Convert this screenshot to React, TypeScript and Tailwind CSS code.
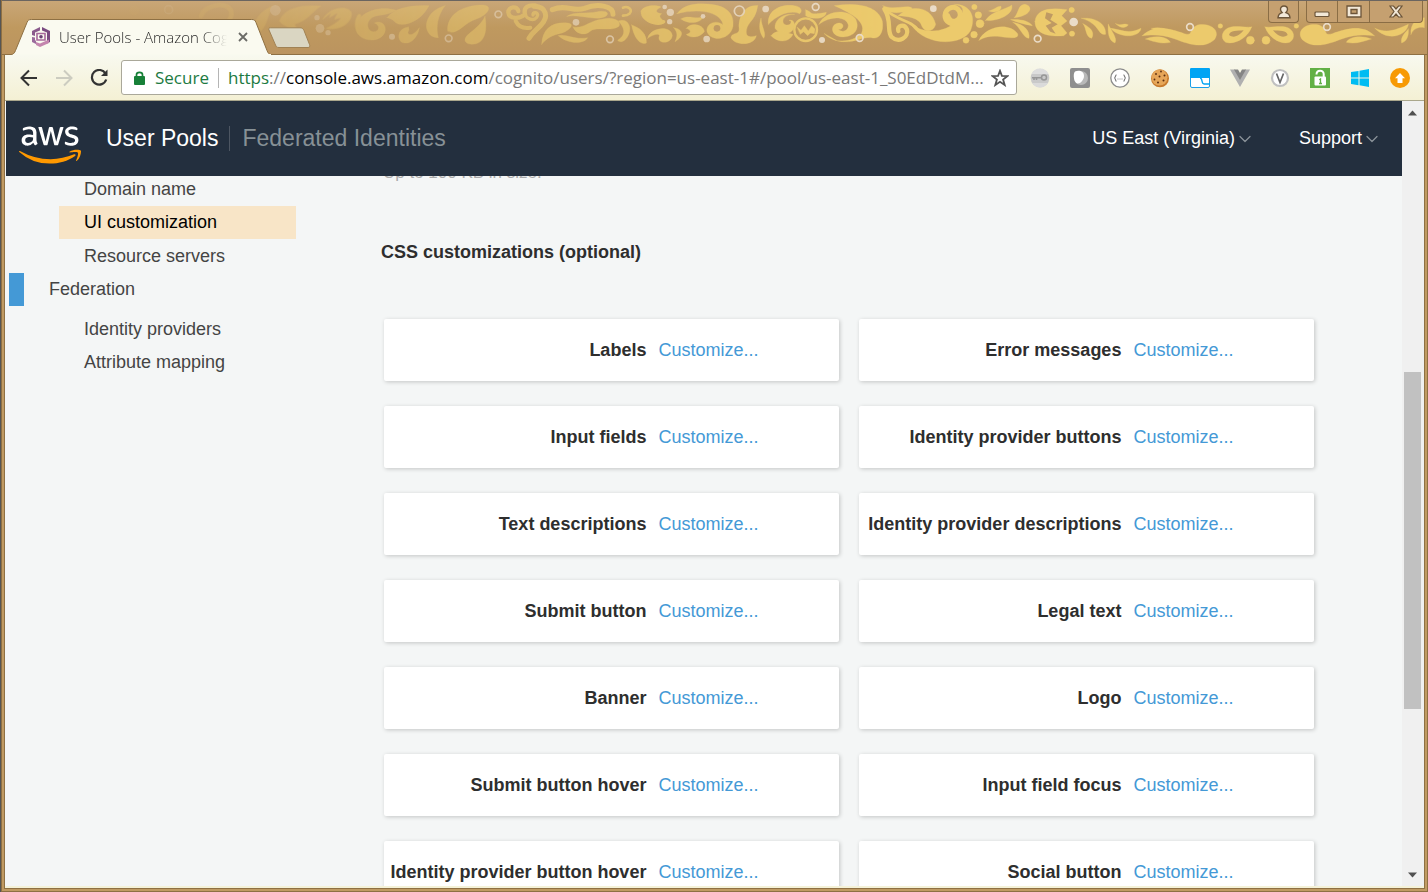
import React from "react";
import { FaAws } from "react-icons/fa";
import { ChevronDown } from "lucide-react";

const settings: string[] = [
  "Labels",
  "Error messages",
  "Input fields",
  "Identity provider buttons",
  "Text descriptions",
  "Identity provider descriptions",
  "Submit button",
  "Legal text",
  "Banner",
  "Logo",
  "Submit button hover",
  "Input field focus",
  "Identity provider button hover",
  "Social button",
];

function Dot({ x, y, r }: { x: number; y: number; r: number }) {
  return <circle cx={x} cy={y} r={r} fill="#eadcc8" stroke="none" />;
}

function Ring({ x, y, r }: { x: number; y: number; r: number }) {
  return <circle cx={x} cy={y} r={r} fill="none" stroke="#eadcc8" strokeWidth="5" />;
}

/* Golden scroll-work that fades in from the left of the title bar. */
function Ornament() {
  return (
    <svg
      className="pointer-events-none absolute -left-[2px] top-0 ml-px"
      width="1428"
      height="54"
      viewBox="0 0 1428 54"
      aria-hidden="true"
    >
      <defs>
        <linearGradient id="fade" gradientUnits="userSpaceOnUse" x1="180" y1="0" x2="880" y2="0">
          <stop offset="0" stopColor="#fff" stopOpacity="0.1" />
          <stop offset="0.35" stopColor="#fff" stopOpacity="0.42" />
          <stop offset="1" stopColor="#fff" stopOpacity="1" />
        </linearGradient>
        <mask id="fadeMask" maskUnits="userSpaceOnUse" x="0" y="0" width="1428" height="54">
          <rect width="1428" height="54" fill="url(#fade)" />
        </mask>
      </defs>
      <g mask="url(#fadeMask)" fill="#ecca6c" stroke="#ecca6c" strokeLinecap="round" strokeWidth="1">
        <g transform="scale(0.33333)">
          <path d="M600 45C610 10 680 0 690 30C700 60 650 90 640 60" fill="none" strokeWidth="14" />
          <path d="M760 70C770 40 790 25 815 15C800 40 800 70 780 90Z" />
          <path d="M835 60C850 20 900 10 960 15C930 35 920 60 880 70C895 85 880 100 870 85C860 75 845 75 835 60Z" />
          <path d="M965 55C985 15 1050 10 1052 40C1050 70 1010 90 975 82C1000 70 1015 60 1020 50L1000 55L1010 35L985 50L990 35Z" />
          <path d="M1075 45C1060 70 1070 100 1090 100" fill="none" strokeWidth="12" />
          <circle cx="400" cy="28" r="14" opacity="0.5" />
          <Ring x={503} y={26} r={12} />
          <Dot x={823} y={28} r={16} />
          <Dot x={948} y={50} r={8} />
          <Dot x={957} y={82} r={13} />
          <Dot x={981} y={95} r={8} />
        </g>
        <g transform="translate(320 0) scale(0.33333)">
          <path d="M226 28C170 10 105 38 105 82C108 124 180 130 192 92C198 70 178 56 160 66C178 72 176 92 158 92C136 92 132 56 162 46C184 40 196 44 226 28Z" />
          <path d="M198 50C220 20 270 12 324 14C306 50 270 72 238 70C218 68 222 54 198 50Z" />
          <path d="M372 14C330 24 310 60 318 86C324 104 338 110 352 110C344 76 350 44 372 14Z" />
          <path d="M380 90C376 44 420 12 486 12C520 14 498 44 466 54C430 66 416 94 392 94Z" />
          <path d="M492 46C500 90 492 130 452 130C426 128 428 112 442 100C464 82 482 68 492 46Z" />
          <path d="M262 78C234 80 226 108 240 122C262 136 290 114 295 80C284 96 268 106 262 98C258 92 268 90 262 78Z" />
          <g fill="none">
            <path d="M592 30C590 14 562 16 562 34C564 56 598 54 612 40C606 18 624 10 644 14" strokeWidth="13" />
            <path d="M640 16C676 18 684 46 660 72C646 88 634 94 624 112" strokeWidth="15" />
            <path d="M612 26C606 56 646 66 650 42C648 32 636 34 636 42" strokeWidth="10" />
            <path d="M584 60C592 76 606 84 628 80" strokeWidth="12" />
            <path d="M694 26C736 8 756 34 790 22C830 6 876 14 876 40" strokeWidth="15" />
            <path d="M906 20C930 10 944 42 906 44" strokeWidth="8" />
            <path d="M968 44C984 66 1014 72 1028 62" strokeWidth="10" />
          </g>
          <path d="M662 130C664 84 692 62 740 66C768 70 738 94 716 98C696 102 678 110 662 130Z" />
          <path d="M738 46C760 30 790 40 830 32C860 26 868 40 850 48C820 60 772 38 738 46Z" />
          <path d="M756 78C790 84 800 60 846 54C880 46 902 62 894 76C870 94 824 74 806 92C790 106 764 98 756 78Z" />
          <path d="M712 104C740 98 760 118 800 110C790 130 740 130 712 104Z" />
          <path d="M892 60C914 50 934 70 924 98C916 120 898 128 890 118C918 100 910 80 892 60Z" />
          <path d="M932 72C958 80 978 100 976 126C958 134 938 110 932 72Z" />
          <path d="M960 30C970 10 1010 12 1020 18C1000 28 1004 36 1022 38C1006 48 1030 56 1030 66C1000 76 956 60 960 30Z" />
          <path d="M980 112C986 80 1050 70 1054 104C1050 130 1010 130 1014 108C1020 96 1000 98 980 112Z" />
          <Dot x={213} y={107} r={9} />
          <Ring x={383} y={112} r={10} />
          <Ring x={532} y={40} r={10} />
          <Dot x={765} y={64} r={10} />
          <Ring x={867} y={115} r={10} />
          <Dot x={1031} y={18} r={7} />
          <Dot x={1048} y={34} r={11} />
          <Dot x={1046} y={62} r={8} />
        </g>
        <g transform="translate(660 0) scale(0.33333)">
          <path d="M48 38C70 8 110 6 150 10C200 16 220 40 216 76C208 118 150 124 138 92C134 66 168 54 186 72C182 40 130 18 48 38Z" />
          <circle cx="168" cy="82" r="10" fill="#bf9a63" stroke="none" />
          <path d="M38 80C66 84 72 104 42 122C50 104 50 94 38 80Z" />
          <path d="M60 54C80 40 104 56 126 48C120 66 84 72 60 54Z" />
          <path d="M76 82C94 60 130 74 130 92C110 116 80 108 76 100C92 96 92 88 76 82Z" />
          <path d="M290 14C250 10 232 50 234 80C238 104 212 92 210 110C220 134 280 136 286 104C268 110 254 108 256 90C260 60 284 60 290 14Z" />
          <path d="M300 52C292 76 296 96 308 112C318 100 302 80 300 52Z" />
          <path d="M322 70C318 30 356 8 400 14C420 16 426 30 416 38C390 26 350 40 322 70Z" />
          <path d="M400 40C360 40 360 70 376 72C392 74 394 58 384 58C400 52 410 80 388 94C370 104 350 94 342 82C340 60 360 36 400 40Z" />
          <path d="M330 104C350 126 384 126 396 100C376 96 350 80 330 104Z" />
          <circle cx="434" cy="86" r="34" fill="none" strokeWidth="7" />
          <path d="M408 78L420 88L430 74L442 90L452 74L462 84L460 98L448 96L440 104L428 92L418 100Z" />
          <path d="M434 26C460 36 440 44 496 34C494 56 454 56 434 44Z" />
          <path d="M474 70C490 28 560 20 584 54C604 98 556 116 528 104C508 96 510 66 536 66C556 70 542 90 532 84C540 96 562 92 562 72C556 46 510 42 474 70Z" />
          <path d="M490 98C520 130 570 124 600 100C620 66 576 38 520 14C590 4 650 14 664 60C670 100 650 116 632 110C600 106 580 130 530 120Z" />
          <g fill="none">
            <path d="M670 24C694 60 676 90 692 108C714 128 744 108 738 86C730 66 706 74 712 90" strokeWidth="13" />
            <path d="M676 28C710 60 750 56 772 88" strokeWidth="8" />
            <path d="M860 44C868 74 906 60 896 32C884 8 854 20 852 44C852 60 870 74 892 70" strokeWidth="15" />
          </g>
          <path d="M666 14C700 30 740 8 754 22C740 34 700 40 680 30Z" />
          <path d="M712 44C750 10 810 14 824 70C816 98 788 92 782 74C776 50 740 46 712 44Z" />
          <path d="M750 70C790 100 850 96 890 60C920 20 900 14 880 10C930 10 946 50 928 90C900 136 790 136 750 70Z" />
          <circle cx="940" cy="18" r="8" />
          <circle cx="952" cy="42" r="10" />
          <circle cx="957" cy="68" r="12" />
          <circle cx="939" cy="101" r="10" />
          <circle cx="915" cy="118" r="9" />
          <path d="M954 118C970 80 1040 60 1070 98C1076 116 1040 110 1010 106C990 104 970 108 954 118Z" />
          <path d="M974 58C990 30 1040 24 1052 12C1060 40 1010 62 974 58Z" />
          <path d="M984 30C1004 24 1010 14 1020 16C1024 30 1000 38 984 30Z" />
          <path d="M1060 50C1076 30 1070 14 1090 10C1120 14 1110 46 1060 50Z" />
          <path d="M1050 56C1080 54 1104 60 1114 74C1090 70 1070 64 1050 56Z" />
          <path d="M1056 64C1090 70 1108 90 1104 112C1086 112 1080 80 1056 64Z" />
          <Ring x={235} y={30} r={15} />
          <Dot x={126} y={46} r={7} />
          <Dot x={137} y={114} r={10} />
          <Dot x={314} y={24} r={10} />
          <Ring x={464} y={18} r={10} />
          <Dot x={483} y={117} r={9} />
          <Ring x={596} y={111} r={10} />
          <Dot x={817} y={23} r={10} />
        </g>
        <g transform="translate(1020 0) scale(0.33333)">
          <path d="M42 62C46 22 90 20 138 26L122 44L138 60L120 74L138 96L128 104C80 108 42 98 42 62Z" />
          <path d="M76 34L96 40L88 56L110 70L92 80L104 98L88 92L74 74L92 66L72 52Z" fill="#bf9a63" stroke="none" />
          <circle cx="152" cy="27" r="8" />
          <circle cx="153" cy="98" r="8" />
          <path d="M182 52C220 48 256 66 254 100C228 104 240 70 182 52Z" />
          <path d="M186 68C210 80 222 94 212 112C192 106 198 84 186 68Z" />
          <path d="M262 70C272 92 290 112 282 126C262 120 260 92 262 70Z" />
          <path d="M268 82C300 84 320 102 360 82C358 108 300 116 268 82Z" />
          <path d="M284 68C304 76 310 64 322 72C312 84 296 80 284 68Z" />
          <path d="M364 104C400 68 450 84 490 98C520 106 500 84 530 72C570 64 600 90 580 116C546 146 500 128 462 114C430 102 400 100 364 104Z" />
          <path d="M374 114C400 102 440 106 448 124C420 130 400 122 374 114Z" />
          <path d="M392 82C410 78 430 80 440 90C420 92 404 88 392 82Z" />
          <circle cx="598" cy="75" r="7" />
          <path d="M692 78C680 112 640 132 614 124C596 112 602 84 630 78C650 74 670 80 692 78Z" />
          <path d="M668 88C650 90 626 88 624 102C640 114 656 102 668 88Z" fill="#bd985f" stroke="none" />
          <circle cx="688" cy="118" r="12" />
          <circle cx="735" cy="118" r="12" />
          <path d="M732 78C744 112 780 132 806 124C826 112 820 84 794 78C774 74 754 80 732 78Z" />
          <path d="M756 88C774 90 798 88 800 102C784 114 768 102 756 88Z" fill="#bd985f" stroke="none" />
          <circle cx="826" cy="75" r="7" />
          <path d="M1060 104C1024 68 974 84 934 98C904 106 924 84 894 72C854 64 824 90 844 116C878 146 924 128 962 114C994 102 1024 100 1060 104Z" />
          <path d="M1050 114C1024 102 984 106 976 124C1004 130 1024 122 1050 114Z" />
          <path d="M1062 82C1100 100 1130 84 1162 70C1158 104 1100 124 1062 82Z" />
          <path d="M1162 84C1164 104 1158 120 1142 126C1138 108 1152 96 1162 84Z" />
          <path d="M1170 100C1166 66 1190 52 1210 50V80C1194 76 1176 84 1170 100Z" />
          <Ring x={50} y={113} r={10} />
          <Dot x={158} y={63} r={13} />
          <Ring x={507} y={78} r={10} />
          <Ring x={918} y={78} r={10} />
        </g>
      </g>
    </svg>
  );
}

function PoolIcon() {
  return (
    <svg className="shrink-0" width="20" height="20" viewBox="0 0 20 20" aria-hidden="true">
      <path d="M9 0L1 4V8L4 9V5.500L9 3.500Z" fill="#8a5a8c" />
      <path d="M1 10V15L5 17V14L4 13V10.500Z" fill="#9a6a9c" />
      <path d="M11 0L19 4V15L16 16.500V5.500L11 3.500Z" fill="#7a4a80" />
      <path d="M9 20L5 18V15L9 16.500L18 12.500V16Z" fill="#c485ae" />
      <path d="M6 6.500H14V13H6Z" fill="none" stroke="#a86a9c" strokeWidth="1.600" />
      <circle cx="10" cy="9.800" r="1.800" fill="#6b3f74" />
    </svg>
  );
}

function Extension({ label, children }: { label: string; children: React.ReactNode }) {
  return (
    <button type="button" aria-label={label} className="size-5 shrink-0">
      <svg width="20" height="20" viewBox="0 0 20 20" aria-hidden="true">
        {children}
      </svg>
    </button>
  );
}

function Extensions() {
  return (
    <div className="flex items-center gap-5 pl-[13px] pr-[14px]">
      <Extension label="Key manager">
        <circle cx="10" cy="10" r="9.300" fill="#c9c9c9" />
        <path d="M1.500 6A9.300 9.300 0 0 1 18.500 6Z" fill="#dedede" />
        <path d="M2 15A9.300 9.300 0 0 0 18 15Z" fill="#dadada" />
        <circle cx="14" cy="9.600" r="2.500" fill="none" stroke="#979797" strokeWidth="1.500" />
        <path d="M11.500 9.800H2M4 10v2M6.500 10v2" stroke="#979797" strokeWidth="1.600" fill="none" />
      </Extension>
      <Extension label="Page viewer">
        <rect width="20" height="20" rx="2" fill="#8f8f8f" />
        <circle cx="11" cy="10" r="7" fill="#b9b9b9" />
        <path d="M5 3.500C9 2 14 3 14 8C14 12 10 16 7.500 15.500C4 15 2.500 6 5 3.500Z" fill="#fff" />
      </Extension>
      <Extension label="JSON formatter">
        <circle cx="10" cy="10" r="9.200" fill="#fff" stroke="#8c8c8c" strokeWidth="1.300" />
        <path
          d="M6.500 6.800C5.300 6.800 5.800 9.800 4.300 10C5.800 10.200 5.300 13.200 6.500 13.200M13.500 6.800C14.700 6.800 14.200 9.800 15.700 10C14.200 10.200 14.700 13.200 13.500 13.200"
          fill="none"
          stroke="#777"
          strokeWidth="1.200"
        />
        <path d="M7.500 11h1M9.500 11h1M11.500 11h1" stroke="#888" strokeWidth="1" />
      </Extension>
      <Extension label="Cookie editor">
        <circle cx="10" cy="10.300" r="9" fill="#c87a2c" />
        <circle cx="9.500" cy="9.500" r="8" fill="#e6a659" />
        <g fill="#5a2d10">
          <circle cx="6" cy="6" r="0.900" />
          <circle cx="11" cy="3.500" r="0.900" />
          <circle cx="14.500" cy="7.500" r="1" />
          <circle cx="9.500" cy="8.500" r="1" />
          <circle cx="4.500" cy="11.500" r="0.900" />
          <circle cx="8" cy="14.500" r="1" />
          <circle cx="13.500" cy="12.500" r="1" />
        </g>
      </Extension>
      <Extension label="Tab layout">
        <rect x="0.500" y="0.500" width="19" height="19" rx="1.500" fill="#fff" stroke="#1a9fe8" />
        <path d="M0 1.500C0 .500 .500 0 1.500 0H18.500C19.500 0 20 .500 20 1.500V10H0Z" fill="#00a4f4" />
        <path d="M10 10C13 10 11 16 14 16H20" fill="none" stroke="#00a4f4" strokeWidth="1.400" />
      </Extension>
      <Extension label="Vue devtools">
        <path d="M0 1.500H5L10 10.500L15 1.500H20L10 19Z" fill="#b0b0b0" />
        <path d="M4 1.500H8L10 5L12 1.500H16L10 12Z" fill="#858585" />
      </Extension>
      <Extension label="Vimium">
        <circle cx="10" cy="10" r="8" fill="#fff" stroke="#c0c0c0" strokeWidth="2.200" />
        <path d="M6.500 5.500L10 14.500L13.500 5.500" fill="none" stroke="#666" strokeWidth="1.700" />
      </Extension>
      <Extension label="Password manager">
        <rect width="20" height="20" fill="#62b045" />
        <rect x="4.500" y="8.500" width="11.500" height="9" rx="1" fill="#fff" />
        <path d="M6.500 6.500C6.500 1.500 13.700 1.500 13.700 6V9" fill="none" stroke="#fff" strokeWidth="2" />
        <path d="M9.300 11.800L10.500 11V15.500M9 15.500H12" fill="none" stroke="#62b045" strokeWidth="1.300" />
      </Extension>
      <Extension label="Windows">
        <path d="M1 4L8.500 2.900V9.400H1ZM9.500 2.700L19 1V9.400H9.500ZM1 10.500H8.500V17.200L1 16.100ZM9.500 10.500H19V19L9.500 17.300Z" fill="#00bcf2" />
      </Extension>
      <Extension label="Update available">
        <circle cx="10" cy="10" r="10" fill="#f79a05" />
        <path d="M10 5L15 10.300H12.500V15H7.500V10.300H5Z" fill="#fff" />
      </Extension>
    </div>
  );
}

function TitleBar() {
  return (
    <header className="relative -mx-[3px] flex h-[55px] shrink-0 justify-between border-b border-t border-b-[#8e7043] border-t-[#6b6560] bg-linear-to-b from-[#c9a677] via-[#bf995f] to-[#bb945f] pl-[3px] pr-1">
      <Ornament />
      <div className="relative flex items-end">
        <div className="relative -mb-px h-9 w-[262px]">
          <svg className="absolute left-0 top-0" width="266" height="36" viewBox="0 0 266 36" aria-hidden="true">
            <path
              d="M0 35.500H6C8.500 35.500 9.500 34 10.500 31.500L22 3.500C23 1 24 .500 26.500 .500H246.500C249 .500 250 1 251 3.500L262 31.500C263 34 264 35.500 266 35.500V37H0Z"
              fill="#fafaf0"
              stroke="#8e7043"
            />
            <path d="M8 35H266V37H8Z" fill="#f9faef" />
          </svg>
          <div className="relative flex h-full items-center pl-[26px]">
            <PoolIcon />
            <span className="ml-[8px] w-[168px] overflow-hidden whitespace-nowrap bg-linear-to-r from-[#222] from-85% to-transparent bg-clip-text font-['Open_Sans',sans-serif] text-[15px] font-[350] leading-5 text-transparent">
              User Pools - Amazon Cog
            </span>
            <button type="button" aria-label="Close tab" className="ml-[11px]">
              <svg width="10" height="10" viewBox="0 0 10 10" aria-hidden="true">
                <path d="M1 1L9 9M9 1L1 9" stroke="#6b6b66" strokeWidth="1.800" />
              </svg>
            </button>
          </div>
        </div>
        <button type="button" aria-label="New tab" className="mb-[5px]">
          <svg width="44" height="22" viewBox="0 0 44 22" aria-hidden="true">
            <path
              d="M3.500 .800H33C35 .800 36 1.500 37 3.500L42.500 17.500C43.300 19.500 42.500 20.500 41 20.500H12C10 20.500 9.300 20 8.500 18L2 3C1.300 1.500 2 .800 3.500 .800Z"
              fill="#dad6c2"
              stroke="#a08254"
            />
          </svg>
        </button>
      </div>
      <div className="relative flex items-start gap-[7px]">
        <button
          type="button"
          aria-label="Profile"
          className="flex h-[22px] w-[31px] items-center justify-center rounded-b-[4px] border border-t-0 border-[#8a6d45] bg-[#c5a070]"
        >
          <svg width="14" height="14" viewBox="0 0 14 14" aria-hidden="true">
            <path
              d="M7 1C9.300 1 10.500 2.400 10.500 4.200C10.500 5.800 9.600 6.900 8.900 7.600C11 8.200 12.800 9.500 13 12.700H1C1.200 9.500 3 8.200 5.100 7.600C4.400 6.900 3.500 5.800 3.500 4.200C3.500 2.400 4.700 1 7 1Z"
              fill="#f2e8d8"
              stroke="#6b5439"
              strokeWidth="1.400"
            />
          </svg>
        </button>
        <div className="flex h-[22px] overflow-hidden rounded-b-[4px] border border-t-0 border-[#8a6d45] bg-[#c5a070]">
          <button type="button" aria-label="Minimize" className="flex w-[31px] items-center justify-center border-r border-[#8a6d45] pt-[6px]">
            <svg width="16" height="7" viewBox="0 0 16 7" aria-hidden="true">
              <rect x="1" y="1" width="14" height="4.500" rx="1" fill="#f2e8d8" stroke="#6b5439" strokeWidth="1.200" />
            </svg>
          </button>
          <button type="button" aria-label="Maximize" className="flex w-8 items-center justify-center border-r border-[#8a6d45]">
            <svg width="16" height="13" viewBox="0 0 16 13" aria-hidden="true">
              <path d="M1 1H15V12H1ZM5 4.500V8.500H11V4.500Z" fill="#f2e8d8" fillRule="evenodd" stroke="#6b5439" strokeWidth="1.300" />
            </svg>
          </button>
          <button type="button" aria-label="Close" className="flex w-[52px] items-center justify-center">
            <svg width="14" height="13" viewBox="0 0 14 13" aria-hidden="true">
              <path
                d="M1 1H4.500L7 4L9.500 1H13L9 6.500L13 12H9.500L7 9L4.500 12H1L5 6.500Z"
                fill="#f2e8d8"
                stroke="#6b5439"
                strokeWidth="1.200"
              />
            </svg>
          </button>
        </div>
      </div>
    </header>
  );
}

function Toolbar() {
  return (
    <div className="flex h-[46px] shrink-0 items-center border-b border-[#aaa78c] bg-linear-to-b from-[#f8f9ef] to-[#f4f0d4]">
      <div className="flex items-center gap-[17px] pl-[15px] pr-[13px]">
        <button type="button" aria-label="Back">
          <svg width="18" height="18" viewBox="0 0 18 18" aria-hidden="true">
            <path d="M17 9H2M9 1.500L1.500 9L9 16.500" fill="none" stroke="#333" strokeWidth="2" />
          </svg>
        </button>
        <button type="button" aria-label="Forward" disabled>
          <svg width="18" height="18" viewBox="0 0 18 18" aria-hidden="true">
            <path d="M1 9H16M9 1.500L16.500 9L9 16.500" fill="none" stroke="#ccccc0" strokeWidth="2" />
          </svg>
        </button>
        <button type="button" aria-label="Reload">
          <svg width="18" height="18" viewBox="0 0 18 18" aria-hidden="true">
            <path d="M15.500 4.500A7.300 7.300 0 1 0 16.200 10.500" fill="none" stroke="#333" strokeWidth="2.200" />
            <path d="M17.500 .500V7H11Z" fill="#333" />
          </svg>
        </button>
      </div>
      <div className="flex h-[35px] min-w-0 flex-1 items-center rounded-[3px] border border-[#aaa89a] bg-white pl-3 pr-[7px] font-['Open_Sans',sans-serif] text-[17px] font-[370]">
        <svg className="shrink-0" width="11" height="14" viewBox="0 0 11 14" aria-hidden="true">
          <rect y="5" width="11" height="9" rx="1" fill="#178038" />
          <path d="M2.500 6V3.800C2.500 .500 8.500 .500 8.500 3.800V6" fill="none" stroke="#178038" strokeWidth="1.700" />
        </svg>
        <span className="ml-[10px] w-[53px] text-[#1c7a42]">Secure</span>
        <span className="ml-[10px] h-5 w-px shrink-0 bg-[#b5b5b5]" />
        <div
          role="textbox"
          aria-label="Address"
          tabIndex={0}
          className="ml-[9px] min-w-0 flex-1 overflow-hidden whitespace-nowrap text-[#787878]"
        >
          <span className="text-[#1c7a42]">https</span>://<span className="text-black">console.aws.amazon.com</span>
          /cognito/users/?region=us-east-1#/pool/us-east-1_S0EdDtdM...
        </div>
        <button type="button" aria-label="Bookmark this page" className="shrink-0">
          <svg width="18" height="18" viewBox="0 0 18 18" aria-hidden="true">
            <path
              d="M9 1.800L10.900 6.800L16.500 7L12.100 10.500L13.700 16L9 12.800L4.300 16L5.900 10.500L1.500 7L7.100 6.800Z"
              fill="none"
              stroke="#555"
              strokeWidth="1.800"
            />
          </svg>
        </button>
      </div>
      <Extensions />
    </div>
  );
}

function ConsoleHeader() {
  return (
    <header className="flex h-[75px] shrink-0 items-center bg-[#232f3e] pl-[13px] pr-[20px] text-white">
      <svg className="size-0" aria-hidden="true">
        <linearGradient id="awsFill" gradientUnits="userSpaceOnUse" x1="0" y1="0" x2="0" y2="512">
          <stop offset="0.580" stopColor="#fff" />
          <stop offset="0.580" stopColor="#ff9900" />
        </linearGradient>
      </svg>
      <a href="#home" aria-label="AWS" className="pt-3">
        <FaAws className="h-[50px] w-[62px]" fill="url(#awsFill)" />
      </a>
      <nav className="ml-[25px] flex items-center pb-px text-[23px] leading-7">
        <a href="#pools" className="whitespace-nowrap">
          User Pools
        </a>
        <span className="ml-[11px] mr-[12px] h-[25px] w-px bg-[#4d5662]" />
        <a href="#identities" className="whitespace-nowrap text-[#879196]">
          Federated Identities
        </a>
      </nav>
      <div className="ml-auto flex items-center gap-[44px] text-[18px]">
        <button type="button" className="flex items-center whitespace-nowrap">
          US East (Virginia)
          <ChevronDown size={20} strokeWidth={1.5} className="text-[#8a9299]" />
        </button>
        <button type="button" className="flex items-center">
          Support
          <ChevronDown size={20} strokeWidth={1.5} className="text-[#8a9299]" />
        </button>
      </div>
    </header>
  );
}

function Sidebar() {
  return (
    <nav className="-mt-[3px] w-[290px] shrink-0 text-[18px] leading-[33px] text-[#444]">
      <a href="#domain" className="ml-[53px] block pl-[25px]">
        Domain name
      </a>
      <a href="#ui" className="ml-[53px] block bg-[#f8e5c7] pl-[25px] text-black">
        UI customization
      </a>
      <a href="#resource" className="ml-[53px] mt-px block pl-[25px]">
        Resource servers
      </a>
      <a href="#federation" className="ml-[3px] block border-l-[15px] border-[#4499d6] pl-[25px]">
        Federation
      </a>
      <a href="#providers" className="ml-[53px] mt-[7px] block pl-[25px]">
        Identity providers
      </a>
      <a href="#mapping" className="ml-[53px] block pl-[25px]">
        Attribute mapping
      </a>
    </nav>
  );
}

function ScrollBar() {
  return (
    <div className="flex w-[22px] shrink-0 flex-col items-center bg-[#f0f0f0]" aria-hidden="true">
      <svg className="shrink-0" width="22" height="20" viewBox="0 0 22 20">
        <path d="M6 14.500L10.500 9.500L15 14.500Z" fill="#505050" />
      </svg>
      <div className="flex-[251]" />
      <div className="mr-px w-[17px] flex-[337] bg-[#c1c1c1]" />
      <div className="flex-[157]" />
      <svg className="shrink-0" width="22" height="20" viewBox="0 0 22 20">
        <path d="M6 6.500L10.500 11.500L15 6.500Z" fill="#505050" />
      </svg>
    </div>
  );
}

export default function App() {
  return (
    <div className="flex h-screen flex-col overflow-hidden border-l border-[#555] bg-[#8e7043] pb-1 pl-1 pr-1 font-['Liberation_Sans',Arial,sans-serif]">
      <div className="flex min-h-0 flex-1 flex-col bg-[#f5f2d8] pb-[2px] shadow-[0_0_0_1px_#8e7043,0_0_0_3px_#c09a62]">
        <TitleBar />
        <Toolbar />
        <div className="flex min-h-0 flex-1">
          <div className="flex min-w-0 flex-1 flex-col bg-[#f4f6f6] pl-px">
            <ConsoleHeader />
            <div className="flex min-h-0 flex-1 overflow-hidden">
              <Sidebar />
              <main className="min-w-0 flex-1 pl-[85px] pr-[88px]">
                <p className="-mt-[13px] pl-[2px] text-[17px] leading-5 text-[#aaa]">Up to 100 KB in size.</p>
                <h2 className="mt-[59px] text-[18px] font-bold leading-5 text-[#2e2e2e]">
                  CSS customizations (optional)
                </h2>
                <ul className="mt-[57px] grid grid-cols-2 gap-x-5 gap-y-[25px] pl-[3px]">
                  {settings.map((name) => (
                    <li
                      key={name}
                      className="flex h-[62px] items-center whitespace-nowrap rounded-[2px] bg-white text-[18px] shadow-[1px_1px_4px_rgba(0,0,0,0.2)]"
                    >
                      <span className="w-7/12 pr-[3px] text-right font-bold text-[#2e2e2e]">{name}</span>
                      <a href="#customize" aria-label={`Customize ${name}`} className="ml-[9px] text-[#4499d6]">
                        Customize...
                      </a>
                    </li>
                  ))}
                </ul>
              </main>
            </div>
          </div>
          <ScrollBar />
        </div>
      </div>
    </div>
  );
}
